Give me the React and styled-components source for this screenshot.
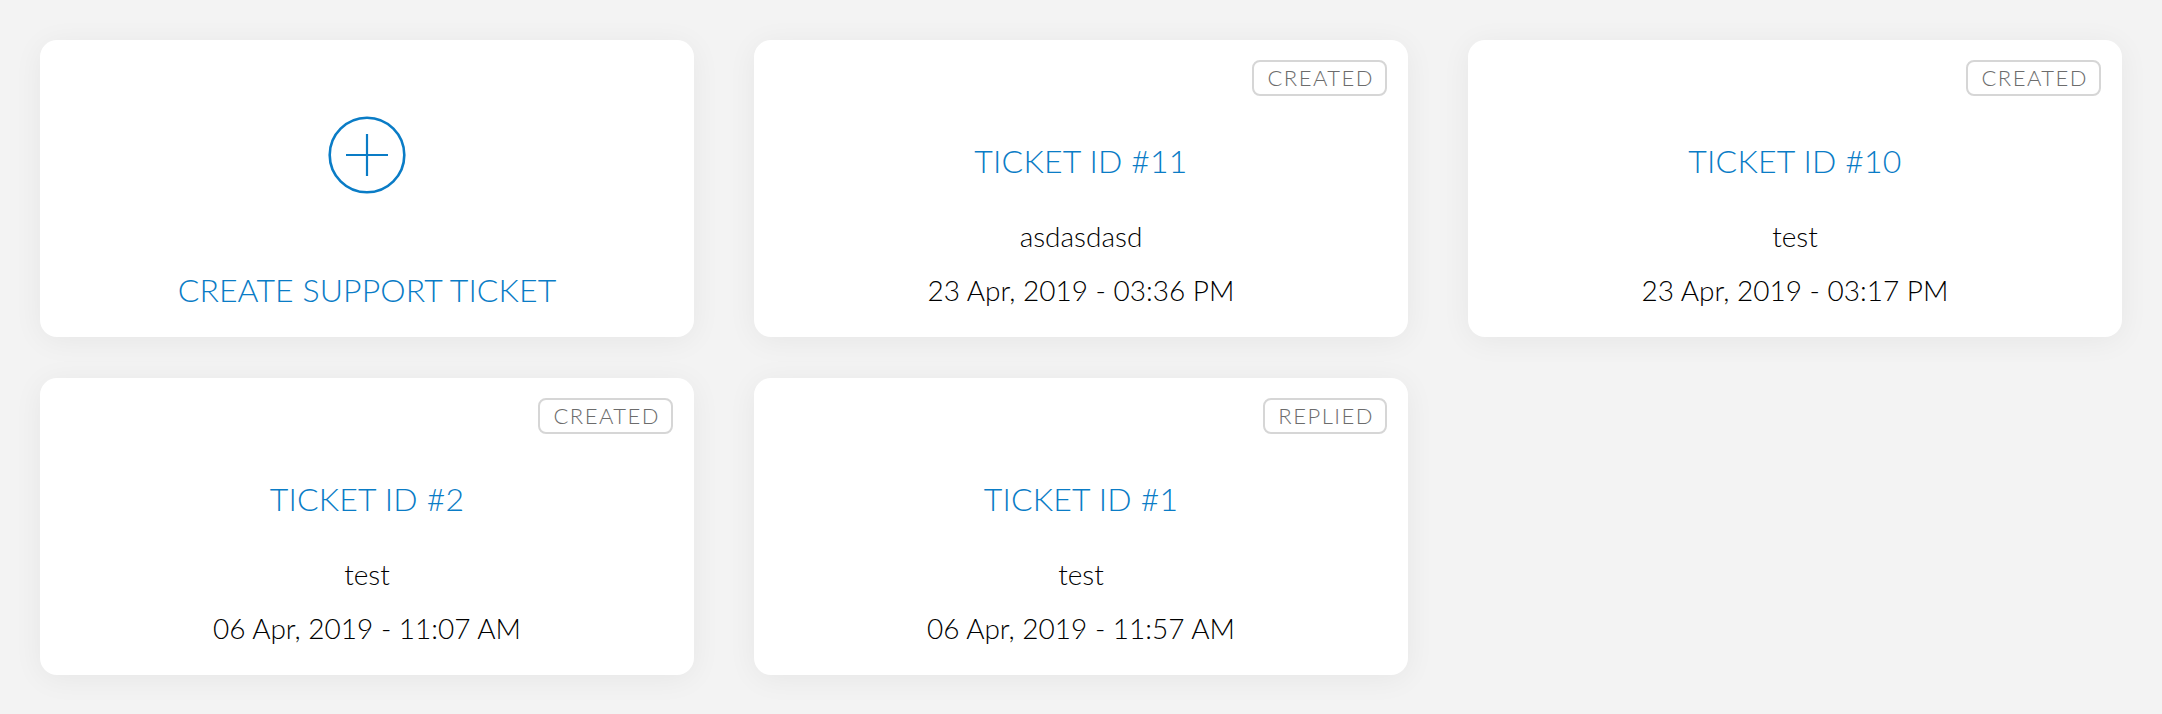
import React from "react";
import styled, { createGlobalStyle } from "styled-components";

const GlobalStyle = createGlobalStyle`
  html, body {
    margin: 0;
    padding: 0;
    background: #f3f3f3;
  }
  body {
    font-family: Lato, "Open Sans", "Liberation Sans", sans-serif;
  }
`;

const Page = styled.div`
  min-height: 714px;
  box-sizing: border-box;
  padding: 40px 43px 40px 40px;
`;

const Grid = styled.div`
  display: grid;
  grid-template-columns: repeat(3, 654px);
  column-gap: 60px;
  row-gap: 41px;
`;

const Card = styled.div`
  position: relative;
  height: 297px;
  box-sizing: border-box;
  background: #ffffff;
  border-radius: 17px;
  box-shadow: 0 4px 30px rgba(0, 0, 0, 0.055);
  display: flex;
  flex-direction: column;
  align-items: center;
  padding-top: ${(p) => p.$pad}px;
  cursor: pointer;
`;

const Badge = styled.span`
  position: absolute;
  top: 20px;
  right: 21px;
  height: 36px;
  box-sizing: border-box;
  display: flex;
  align-items: center;
  padding: 0 11px 0 13px;
  border: 2px solid #d6d6d6;
  border-radius: 8px;
  font-size: 22px;
  font-weight: 300;
  letter-spacing: 1.5px;
  color: #6c6c6c;
  line-height: 1;
`;

const Title = styled.div`
  font-size: 32px;
  font-weight: 300;
  line-height: 1.2;
  letter-spacing: 0.2px;
  color: #0a7cc6;
  text-transform: uppercase;
`;

const Body = styled.div`
  margin-top: 40px;
  font-size: 28px;
  font-weight: 300;
  line-height: 1.2;
  color: #000;
`;

const DateText = styled.div`
  margin-top: 20px;
  font-size: 28px;
  font-weight: 300;
  line-height: 1.2;
  color: #000;
`;

const PlusIcon = styled.svg`
  display: block;
  width: 80px;
  height: 80px;
`;

const CreateLabel = styled.div`
  margin-top: 76px;
  font-size: 32px;
  font-weight: 300;
  line-height: 1.2;
  letter-spacing: 0.1px;
  color: #0a7cc6;
  text-transform: uppercase;
`;

const tickets = [
  { id: 11, status: "CREATED", subject: "asdasdasd", date: "23 Apr, 2019 - 03:36 PM" },
  { id: 10, status: "CREATED", subject: "test", date: "23 Apr, 2019 - 03:17 PM" },
  { id: 2, status: "CREATED", subject: "test", date: "06 Apr, 2019 - 11:07 AM" },
  { id: 1, status: "REPLIED", subject: "test", date: "06 Apr, 2019 - 11:57 AM" },
];

export default function App() {
  return (
    <>
      <GlobalStyle />
      <Page>
        <Grid>
          <Card $pad={75}>
            <PlusIcon viewBox="0 0 80 80" fill="none" stroke="#0a7cc6">
              <circle cx="40" cy="40" r="37.3" strokeWidth="2.6" />
              <line x1="19" y1="40" x2="61" y2="40" strokeWidth="2.2" />
              <line x1="40" y1="19" x2="40" y2="61" strokeWidth="2.2" />
            </PlusIcon>
            <CreateLabel>Create Support Ticket</CreateLabel>
          </Card>
          {tickets.map((t) => (
            <Card key={t.id} $pad={102}>
              <Badge>{t.status}</Badge>
              <Title>Ticket ID #{t.id}</Title>
              <Body>{t.subject}</Body>
              <DateText>{t.date}</DateText>
            </Card>
          ))}
        </Grid>
      </Page>
    </>
  );
}
